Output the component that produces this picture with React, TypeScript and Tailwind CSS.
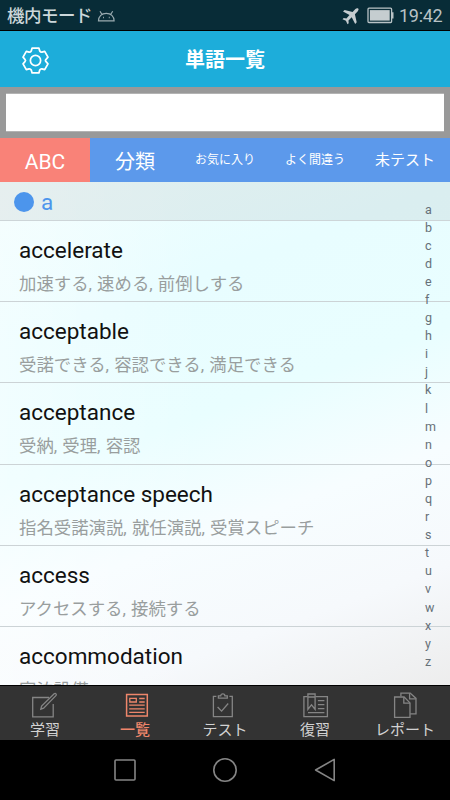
import type { ReactNode } from "react";

const tabs = [
  { label: "ABC", size: "text-[21px] pt-[5px]", active: true },
  { label: "分類", size: "text-[20px] pt-[5px]" },
  { label: "お気に入り", size: "text-[12px] pt-px" },
  { label: "よく間違う", size: "text-[12px] pt-px" },
  { label: "未テスト", size: "text-[15px] pt-[2px]" },
];

const words = [
  { word: "accelerate", meaning: "加速する, 速める, 前倒しする" },
  { word: "acceptable", meaning: "受諾できる, 容認できる, 満足できる" },
  { word: "acceptance", meaning: "受納, 受理, 容認" },
  { word: "acceptance speech", meaning: "指名受諾演説, 就任演説, 受賞スピーチ" },
  { word: "access", meaning: "アクセスする, 接続する" },
  { word: "accommodation", meaning: "宿泊設備" },
];

const letters = "abcdefghijklmnopqrstuvwxyz".split("");

function NavIcon({ children }: { children: ReactNode }) {
  return (
    <svg width="28" height="28" viewBox="0 0 28 28" fill="none" stroke="currentColor" strokeWidth="1.3">
      {children}
    </svg>
  );
}

const navItems = [
  {
    label: "学習",
    icon: (
      <NavIcon>
        <path d="M18 5.5H1.7v19.3h20.5V12" />
        <path d="M9.8 17.2 10.6 14 23.2 1.8a1.2 1.2 0 0 1 1.7 1.8L12.6 16.2Z" />
      </NavIcon>
    ),
  },
  {
    label: "一覧",
    active: true,
    icon: (
      <NavIcon>
        <path d="M5.6 2.6h20.7V24H5.6Z" strokeWidth="1.5" />
        <path d="M8.8 6.4h6.5V10H8.8ZM18.2 6.5h5.5M18.2 10h5.5M8.2 13.2h15.5M8.2 16.8h15.5M8.2 20.3h15.5" />
      </NavIcon>
    ),
  },
  {
    label: "テスト",
    icon: (
      <NavIcon>
        <path d="M5.4 4.3h-3v20.3h18.9V4.3h-2.9" />
        <path d="M7.4 6.1V3.9h2.3a2.1 2.1 0 0 1 4.2 0h2.4v2.2Z" />
        <path d="m6.6 15 4 4.1 6.6-7.6" />
      </NavIcon>
    ),
  },
  {
    label: "復習",
    icon: (
      <NavIcon>
        <path d="M6.6 4.6H2.9v20h23.5v-20h-12" />
        <path d="M6.9 2h7.2v15.3l-3.6-4.5-3.6 4.5ZM6.9 5h7.2M16.9 8.6h6.5M16.9 12.6h6.5M16.9 16.6h6.5M7 20.6h16.4" />
      </NavIcon>
    ),
  },
  {
    label: "レポート",
    icon: (
      <NavIcon>
        <path d="M9.9 4.3V1.1h9.3L25 6.4v15.4h-5.8" />
        <path d="M18.6 1.3v5.6h6.2" />
        <path d="M3.6 5h9.5l5.9 5.9v14.5H3.6Z" />
        <path d="M12.8 5.2v6H19" />
      </NavIcon>
    ),
  },
];

function StatusBar() {
  return (
    <div className="flex h-[31px] shrink-0 items-center border-b border-black bg-[#082c37] pl-[7px] pr-2">
      <span className="w-[84px] whitespace-nowrap pt-[3px] text-[17.5px] font-medium leading-none tracking-[-0.5px] text-[#ccd7da]">
        機内モード
      </span>
      <svg className="ml-1.5 mt-px" width="19" height="14" viewBox="0 0 19 14" fill="none" stroke="#9aabb0" strokeWidth="1.2">
        <path d="M1.5 11.8C1.6 7.5 4.7 4.3 9.3 4.3s7.7 3.2 7.8 7.5ZM4.9 5.3 3 2.2M13.8 5.3l1.9-3.1" />
        <path d="M6 8.6h.9M11.8 8.6h.9" strokeWidth="1.5" />
      </svg>
      <div className="ml-auto flex items-center">
        <svg className="mt-px" width="18" height="18" viewBox="0 0 18 18" fill="#c5cdd0">
          <path d="M16.2 1.6c-.8-.8-2-.3-2.8.5L10.6 5l-8-1.9L1 4.5l6.5 3.6-3.1 3.3-2.7-.4L.5 12.2l3.4 1.6 1.6 3.5 1.2-1.1-.2-2.8 3.2-3.1 3.5 6.6 1.5-1.6-1.8-8.1 2.7-2.8c.9-.9 1.4-2 .6-2.8Z" />
        </svg>
        <svg className="ml-[7px]" width="27" height="17" viewBox="0 0 27 17">
          <rect x="1" y="1.2" width="23.6" height="14.3" rx="1" fill="none" stroke="#b9c3c6" strokeWidth="1.3" />
          <rect x="2.9" y="3.1" width="19.8" height="10.5" fill="#c5cdd0" />
          <path d="M25 5.2h1.5v6.3H25Z" fill="#b9c3c6" />
        </svg>
        <span className="ml-[5px] w-[43px] whitespace-nowrap pt-0.5 text-[18px] leading-none tracking-[-0.3px] text-[#b8c2c5]">
          19:42
        </span>
      </div>
    </div>
  );
}

function Header() {
  return (
    <header className="grid h-14 shrink-0 grid-cols-[80px_1fr_80px] items-center bg-[#1dadda] text-white">
      <svg className="ml-[21px] mt-[3px]" width="29" height="29" viewBox="0 0 30 30" fill="none" stroke="currentColor" strokeWidth="1.8" strokeLinejoin="round">
        <path d="M11.5 2.1h7l.9 3.1q.8 1.4 2.2 1.2l2.9-.9 3.4 6-2 2.3q-1.2 1.2 0 2.4l2 2.3-3.4 6-2.9-.9q-1.4-.2-2.2 1.2l-.9 3.1h-7l-.9-3.1q-.8-1.4-2.2-1.2l-2.9.9-3.4-6 2-2.3q1.2-1.2 0-2.4l-2-2.3 3.4-6 2.9.9q1.4.2 2.2-1.2Z" />
        <circle cx="15" cy="15" r="5.3" />
      </svg>
      <h1 className="pt-px text-center text-[20px] font-bold leading-none">単語一覧</h1>
    </header>
  );
}

export default function App() {
  return (
    <div className="flex h-[800px] w-[450px] flex-col overflow-hidden bg-black font-[Roboto,'Noto_Sans_CJK_JP',sans-serif]">
      <StatusBar />
      <Header />

      {/* Search box */}
      <div className="h-[50.5px] shrink-0 bg-[#999999] p-1.5">
        <input
          type="text"
          aria-label="search"
          className="block h-[38.5px] w-full border-y border-[#b3b3b3] bg-white px-2 outline-none"
        />
      </div>

      {/* Category tabs */}
      <div className="grid h-[44.5px] shrink-0 grid-cols-5 text-white">
        {tabs.map((tab) => (
          <button
            key={tab.label}
            className={`flex items-center justify-center whitespace-nowrap leading-none ${tab.size} ${
              tab.active ? "bg-[#f98278]" : "bg-[#5c99eb]"
            }`}
          >
            {tab.label}
          </button>
        ))}
      </div>

      {/* Word list */}
      <main className="relative h-[503px] shrink-0 overflow-hidden bg-[linear-gradient(90deg,rgba(255,255,255,0.4)_0%,rgba(255,255,255,0)_45%),linear-gradient(160deg,#effefe_0%,#e8fdff_25%,#e9feff_46%,#f7fdff_64%,#f6f9fc_82%,#ededed_100%)]">
        <div className="flex h-[39px] items-center border-b border-[#cdd5d8] bg-black/6 pl-3.5">
          <span className="mt-0.5 size-5 rounded-full bg-[#4c95ec]" />
          <span className="ml-[7px] pt-[3px] text-[22.5px] leading-none text-[#4c95ec]">a</span>
        </div>
        {words.map(({ word, meaning }) => (
          <div key={word} className="h-[81.2px] border-b border-[#ccd3d6] pl-[19px] pt-[15px]">
            <div className="whitespace-nowrap text-[22.5px] leading-7 text-[#111111]">{word}</div>
            <div className="mt-[7px] whitespace-nowrap text-[17.4px] leading-[26px] text-[#999e9e] [word-spacing:0.8px]">
              {meaning}
            </div>
          </div>
        ))}

        {/* Letter index, floating over the list */}
        <div className="absolute left-[425px] top-[18.5px] flex flex-col text-[12.5px] text-[#667078]">
          {letters.map((letter) => (
            <span key={letter} className="h-[18.1px] leading-[18.1px]">
              {letter}
            </span>
          ))}
        </div>
      </main>

      {/* App navigation */}
      <nav className="grid h-[55px] shrink-0 grid-cols-5 border-t border-black bg-[#333333]">
        {navItems.map((item) => (
          <button
            key={item.label}
            className={`flex flex-col items-center pt-1.5 ${item.active ? "text-[#ee866b]" : "text-[#858585]"}`}
          >
            {item.icon}
            <span
              className={`mt-[3px] whitespace-nowrap text-[15px] leading-[15px] ${
                item.active ? "font-medium text-[#ee866b]" : "text-[#d2d2d2]"
              }`}
            >
              {item.label}
            </span>
          </button>
        ))}
      </nav>

      {/* Android buttons */}
      <div className="flex h-[60px] shrink-0 items-center justify-center gap-[72px] bg-black">
        <svg width="28" height="28" viewBox="0 0 28 28" fill="none" stroke="#858585" strokeWidth="1.6">
          <rect x="4" y="4" width="20" height="20" rx="1" />
        </svg>
        <svg width="28" height="28" viewBox="0 0 28 28" fill="none" stroke="#858585" strokeWidth="1.6">
          <circle cx="14" cy="14" r="11.2" />
        </svg>
        <svg width="28" height="28" viewBox="0 0 28 28" fill="none" stroke="#858585" strokeWidth="1.6" strokeLinejoin="round">
          <path d="M23.2 3.4v21.2L4.6 14Z" />
        </svg>
      </div>
    </div>
  );
}
